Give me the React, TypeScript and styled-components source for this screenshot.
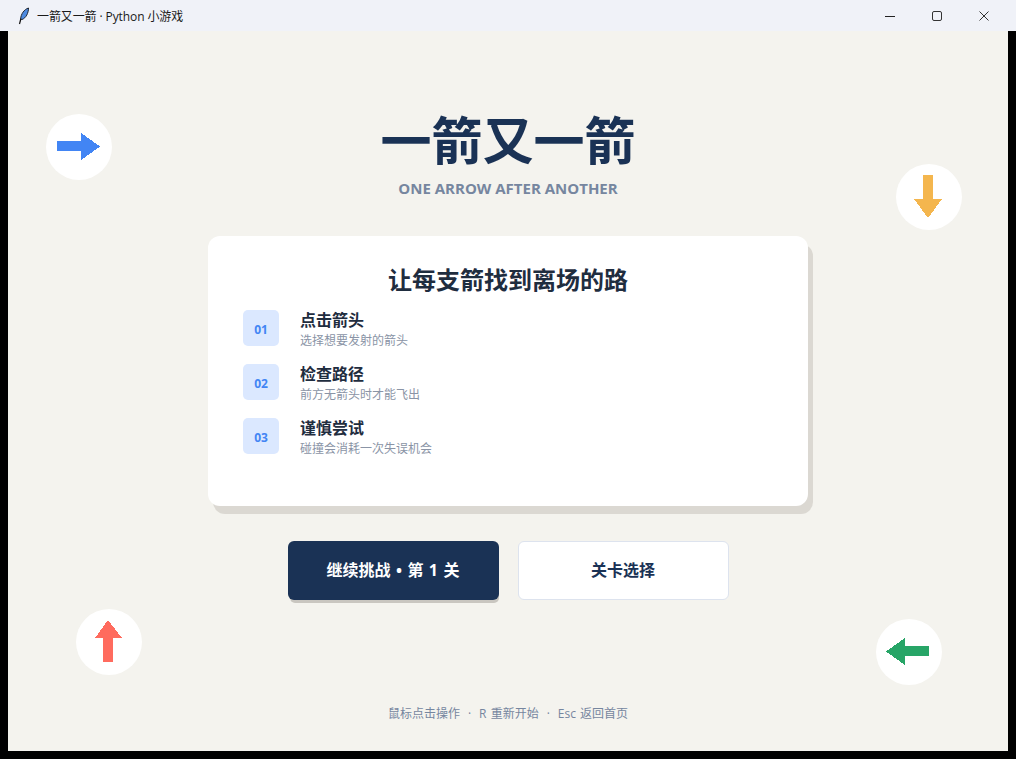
import React from 'react';
import styled, { createGlobalStyle } from 'styled-components';

const cjk = `"Noto Sans CJK SC", "Open Sans", sans-serif`;
const latinFirst = `"Open Sans", "Noto Sans CJK SC", sans-serif`;

const GlobalStyle = createGlobalStyle`
  html, body {
    margin: 0;
    padding: 0;
    background: #000;
  }
  body {
    font-family: ${latinFirst};
  }
`;

const steps = [
  { no: '01', title: '点击箭头', desc: '选择想要发射的箭头' },
  { no: '02', title: '检查路径', desc: '前方无箭头时才能飞出' },
  { no: '03', title: '谨慎尝试', desc: '碰撞会消耗一次失误机会' },
];

type Direction = 'right' | 'down' | 'up' | 'left';

const arrowPoints: Record<Direction, string> = {
  right: '11,27 35,27 35,19 54,32.5 35,46 35,37 11,37',
  down: '27,11 37,11 37,35 46,35 32,54 18,35 27,35',
  up: '27,53 37,53 37,29 46,29 32,11 19,29 27,29',
  left: '53,27 29,27 29,19 10,32.5 29,46 29,37 53,37',
};

const badges: { dir: Direction; color: string; x: number; y: number }[] = [
  { dir: 'right', color: '#4285f4', x: 38, y: 83 },
  { dir: 'down', color: '#f4b64e', x: 888, y: 133 },
  { dir: 'up', color: '#ff6b5e', x: 68, y: 578 },
  { dir: 'left', color: '#27a567', x: 868, y: 588 },
];

export default function App() {
  return (
    <>
      <GlobalStyle />
      <Win>
        <TitleBar>
          <TitleGroup>
            <svg width="14" height="18" viewBox="0 0 14 18">
              <path d="M11.5 1 C7 2.5 4 7 3.6 12 L5 12.5 C9 11 11.5 6 11.5 1 Z" fill="#4d8ae0" stroke="#1c2430" strokeWidth="1" />
              <path d="M3.8 12 L2.5 17" stroke="#111" strokeWidth="1.2" fill="none" />
            </svg>
            <WinTitle>一箭又一箭 · Python 小游戏</WinTitle>
          </TitleGroup>
          <WinControls>
            <WinButton>
              <svg width="12" height="12" viewBox="0 0 12 12">
                <path d="M1 6.5 H11" stroke="#222" strokeWidth="1" />
              </svg>
            </WinButton>
            <WinButton>
              <svg width="12" height="12" viewBox="0 0 12 12">
                <rect x="1.5" y="1.5" width="9" height="9" rx="1.5" fill="none" stroke="#333" strokeWidth="1" />
              </svg>
            </WinButton>
            <WinButton>
              <svg width="12" height="12" viewBox="0 0 12 12">
                <path d="M1.5 1.5 L10.5 10.5 M10.5 1.5 L1.5 10.5" stroke="#333" strokeWidth="1" />
              </svg>
            </WinButton>
          </WinControls>
        </TitleBar>
        <Canvas>
          {badges.map((b) => (
            <ArrowBadge key={b.dir} $x={b.x} $y={b.y}>
              <svg width="66" height="66" viewBox="0 0 66 66" shapeRendering="crispEdges">
                <polygon points={arrowPoints[b.dir]} fill={b.color} />
              </svg>
            </ArrowBadge>
          ))}
          <Heading>一箭又一箭</Heading>
          <SubHeading>ONE ARROW AFTER ANOTHER</SubHeading>
          <Card>
            <CardTitle>让每支箭找到离场的路</CardTitle>
            <StepList>
              {steps.map((s) => (
                <Step key={s.no}>
                  <StepNo>{s.no}</StepNo>
                  <StepText>
                    <StepTitle>{s.title}</StepTitle>
                    <StepDesc>{s.desc}</StepDesc>
                  </StepText>
                </Step>
              ))}
            </StepList>
          </Card>
          <Actions>
            <PrimaryButton>继续挑战 • 第 1 关</PrimaryButton>
            <SecondaryButton>关卡选择</SecondaryButton>
          </Actions>
          <Footer>
            鼠标点击操作<Sep>·</Sep>R 重新开始<Sep>·</Sep>Esc 返回首页
          </Footer>
        </Canvas>
      </Win>
    </>
  );
}

const Win = styled.div`
  width: 1016px;
  height: 759px;
  display: flex;
  flex-direction: column;
  align-items: center;
  background: #000;
  overflow: hidden;
`;

const TitleBar = styled.div`
  width: 100%;
  height: 31px;
  flex: none;
  display: flex;
  align-items: center;
  justify-content: space-between;
  background: #f0f2f8;
`;

const TitleGroup = styled.div`
  display: flex;
  align-items: center;
  gap: 6px;
  padding-left: 17px;
`;

const WinTitle = styled.span`
  font-family: ${latinFirst};
  font-size: 12px;
  letter-spacing: -0.1px;
  color: #1a1a1a;
`;

const WinControls = styled.div`
  display: flex;
  padding-right: 9px;
`;

const WinButton = styled.div`
  width: 47px;
  height: 31px;
  display: flex;
  align-items: center;
  justify-content: center;
`;

const Canvas = styled.main`
  position: relative;
  width: 1000px;
  height: 720px;
  flex: none;
  display: flex;
  flex-direction: column;
  align-items: center;
  padding-top: 69px;
  box-sizing: border-box;
  background: #f4f3ee;
`;

const ArrowBadge = styled.div<{ $x: number; $y: number }>`
  position: absolute;
  left: ${(p) => p.$x}px;
  top: ${(p) => p.$y}px;
  width: 66px;
  height: 66px;
  border-radius: 50%;
  background: #fff;
  svg {
    display: block;
  }
`;

const Heading = styled.h1`
  margin: 0;
  font-family: ${cjk};
  font-size: 51px;
  font-weight: 700;
  line-height: 76px;
  color: #1a3255;
`;

const SubHeading = styled.div`
  margin-top: 2px;
  font-family: "Open Sans", sans-serif;
  font-size: 15px;
  font-weight: 700;
  line-height: 20px;
  color: #76869f;
`;

const Card = styled.section`
  width: 600px;
  height: 270px;
  margin-top: 38px;
  padding: 26px 35px 0;
  box-sizing: border-box;
  background: #fff;
  border-radius: 12px;
  box-shadow: 5px 8px 0 0 #dbd8d2;
`;

const CardTitle = styled.h2`
  margin: 0;
  font-family: ${cjk};
  font-size: 24px;
  font-weight: 700;
  line-height: 34px;
  text-align: center;
  color: #1f2d3f;
`;

const StepList = styled.div`
  margin-top: 14px;
  display: flex;
  flex-direction: column;
  gap: 18px;
`;

const Step = styled.div`
  display: flex;
  align-items: flex-start;
  gap: 21px;
  height: 36px;
`;

const StepNo = styled.div`
  width: 36px;
  height: 36px;
  flex: none;
  display: flex;
  align-items: center;
  justify-content: center;
  padding-top: 2px;
  box-sizing: border-box;
  border-radius: 5px;
  background: #dbe8ff;
  font-family: "Open Sans", sans-serif;
  font-size: 12px;
  font-weight: 700;
  color: #4285f4;
`;

const StepText = styled.div`
  display: flex;
  flex-direction: column;
  margin-top: -1px;
`;

const StepTitle = styled.div`
  font-family: ${cjk};
  font-size: 16px;
  font-weight: 700;
  line-height: 21px;
  color: #1f2d3f;
`;

const StepDesc = styled.div`
  margin-top: 2px;
  font-family: ${cjk};
  font-size: 12px;
  line-height: 16px;
  color: #8a94a6;
`;

const Actions = styled.div`
  margin-top: 35px;
  display: flex;
  gap: 19px;
`;

const PrimaryButton = styled.button`
  width: 211px;
  height: 59px;
  padding: 0 0 3px;
  border: none;
  border-radius: 6px;
  background: #1a3255;
  box-shadow: 1px 4px 0 -1px #c9c6c0;
  font-family: ${latinFirst};
  font-size: 16px;
  font-weight: 700;
  word-spacing: 1.25px;
  color: #fff;
`;

const SecondaryButton = styled.button`
  width: 211px;
  height: 59px;
  padding: 0 0 3px;
  border: 1px solid #dde3ee;
  border-radius: 6px;
  background: #fff;
  font-family: ${cjk};
  font-size: 16px;
  font-weight: 700;
  color: #1a3255;
`;

const Footer = styled.div`
  margin-top: 105px;
  font-family: ${latinFirst};
  font-size: 12px;
  line-height: 18px;
  word-spacing: 1px;
  color: #76869f;
`;

const Sep = styled.span`
  margin: 0 8px;
`;
